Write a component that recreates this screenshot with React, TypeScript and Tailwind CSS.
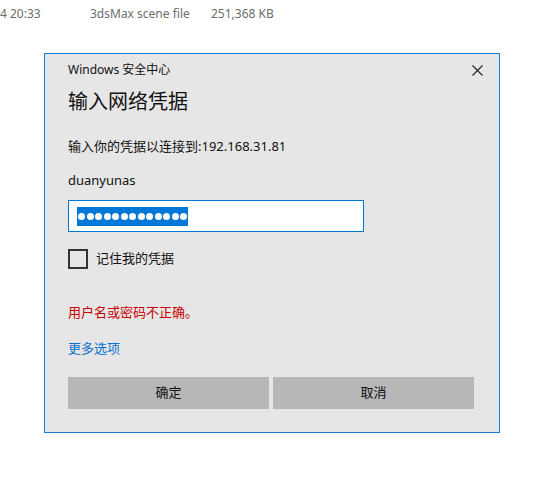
import React from 'react';

const font = { fontFamily: '"Noto Sans", "Noto Sans CJK SC", sans-serif' };

const App = (): JSX.Element => {
  return (
    <div className="w-[556px] h-[500px] bg-white overflow-hidden" style={font}>
      <div className="flex h-[30px] items-center text-[12px] text-[#6d6d6d] -mt-[1px]">
        <span className="w-[90px]">4 20:33</span>
        <span className="w-[121px]">3dsMax scene file</span>
        <span>251,368 KB</span>
      </div>
      <div className="ml-[44px] mt-[24px] w-[456px] h-[380px] border border-[#1a7fd4] bg-[#e6e6e6] flex flex-col px-[23px]">
        <div className="flex items-center justify-between h-[16px] mt-[8px]">
          <span className="text-[12px] text-[#111]">Windows 安全中心</span>
          <svg width="11" height="11" viewBox="0 0 11 11" className="mr-[-7px]">
            <path d="M0.5 0.5 L10.5 10.5 M10.5 0.5 L0.5 10.5" stroke="#222" strokeWidth="1.1" />
          </svg>
        </div>
        <div className="mt-[10px] h-[28px] leading-[28px] text-[20px] text-[#111]">输入网络凭据</div>
        <div className="mt-[21px] h-[18px] leading-[18px] text-[13px] text-[#111]">输入你的凭据以连接到:192.168.31.81</div>
        <div className="mt-[16px] h-[18px] leading-[18px] text-[13px] text-[#111]">duanyunas</div>
        <div className="mt-[11px] w-[296px] h-[32px] border border-[#0078d7] bg-white flex items-center pl-[8px]">
          <span className="bg-[#0078d7] h-[19px] w-[111px] flex items-center pl-[1px] gap-[1.5px]">
            {Array.from({ length: 13 }).map((_, i) => (
              <span key={i} className="w-[7px] h-[7px] rounded-full bg-white" />
            ))}
          </span>
        </div>
        <div className="mt-[17px] flex items-center gap-[8px] h-[20px]">
          <span className="w-[20px] h-[20px] border-2 border-[#333] bg-transparent" />
          <span className="text-[13px] text-[#111]">记住我的凭据</span>
        </div>
        <div className="mt-[34px] h-[18px] leading-[18px] text-[13px] text-[#c80000]">用户名或密码不正确。</div>
        <div className="mt-[18px] h-[18px] leading-[18px] text-[13px] text-[#0a72d0]">更多选项</div>
        <div className="mt-[20px] flex gap-[4px]">
          <button className="w-[201px] h-[32px] bg-[#b7b7b7] text-[13px] text-[#111]">确定</button>
          <button className="w-[201px] h-[32px] bg-[#b7b7b7] text-[13px] text-[#111]">取消</button>
        </div>
      </div>
    </div>
  );
};

export default App;
